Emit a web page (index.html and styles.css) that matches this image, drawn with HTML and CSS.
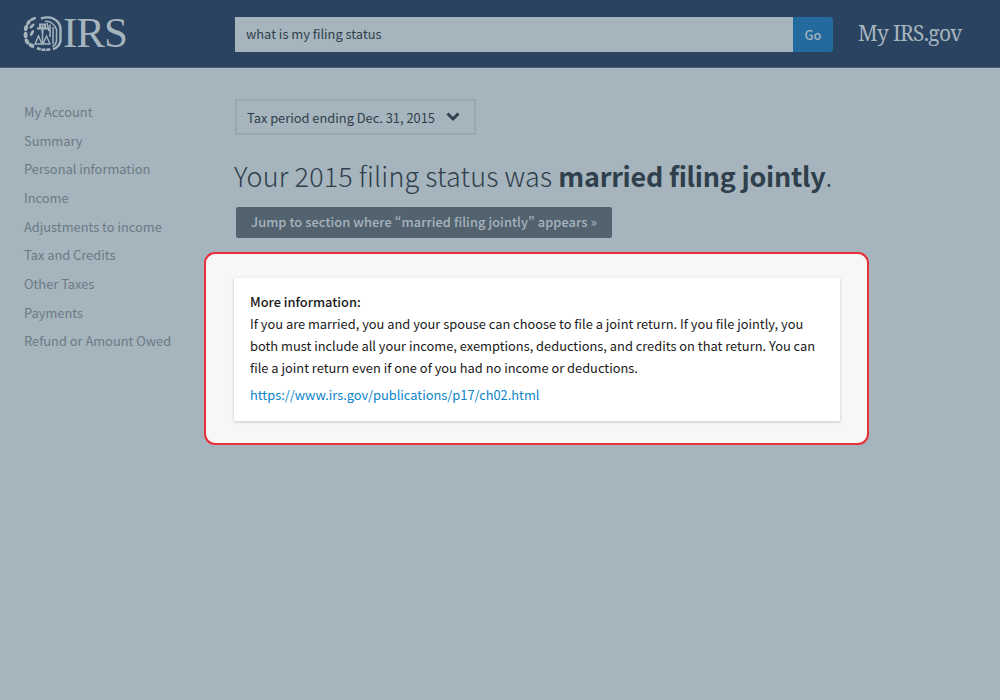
FILE: index.html
```html
<!DOCTYPE html>
<html lang="en">
<head>
<meta charset="utf-8">
<title>IRS</title>
<link rel="stylesheet" href="styles.css">
</head>
<body>
<header class="topbar">
  <a class="logo" href="#">
    <svg class="seal" width="40" height="36" viewBox="0 0 40 36" fill="#a6b4bd" stroke="none">
      <ellipse cx="3" cy="13" rx="2" ry="3.200" transform="rotate(15 3 13)"/>
      <ellipse cx="2.600" cy="20" rx="2" ry="3.200"/>
      <ellipse cx="4" cy="26.500" rx="2" ry="3.200" transform="rotate(-25 4 26.500)"/>
      <ellipse cx="8.500" cy="30.500" rx="3.200" ry="1.900" transform="rotate(30 8.500 30.500)"/>
      <ellipse cx="5.500" cy="7.500" rx="1.700" ry="3" transform="rotate(30 5.500 7.500)"/>
      <ellipse cx="10" cy="4" rx="3.400" ry="1.500" transform="rotate(-25 10 4)"/>
      <ellipse cx="9" cy="11" rx="3.200" ry="1.400" transform="rotate(-45 9 11)"/>
      <ellipse cx="9" cy="18" rx="3.200" ry="1.400" transform="rotate(-60 9 18)"/>
      <g fill="none" stroke="#a6b4bd">
        <path d="M14 33c4 2 9 2.500 14 1" stroke-width="2.600" stroke-dasharray="4 .8"/>
        <path d="M14 13.500h11M19.500 11v7M17 13V9.500h5V13" stroke-width="2"/>
        <path d="M19.500 18v10" stroke-width="1.500"/>
        <path d="M12 29l3.500-8 3.500 8zM20 29l3.500-8 3.500 8z" stroke-width="1.400"/>
        <path d="M18 3.500C27 .5 36 4 37.500 13v13c-1 4-3.500 7-7.500 8" stroke-width="2.400"/>
        <path d="M22 6.500c5-1 10 3 11.500 8V26c-.5 2.500-2 4.500-4 5.500" stroke-width="1.500"/>
        <path d="M30 12v17M27 9.500V22M24 8l2 8" stroke-width="1.500"/>
      </g>
    </svg>
    <span class="wordmark">IRS</span>
  </a>
  <form class="search">
    <div class="search-field">what is my filing status</div>
    <button class="search-go" type="button">Go</button>
  </form>
  <a class="myirs" href="#">My IRS.gov</a>
</header>
<div class="page">
  <nav class="sidenav">
    <a href="#">My Account</a>
    <a href="#">Summary</a>
    <a href="#">Personal information</a>
    <a href="#">Income</a>
    <a href="#">Adjustments to income</a>
    <a href="#">Tax and Credits</a>
    <a href="#">Other Taxes</a>
    <a href="#">Payments</a>
    <a href="#">Refund or Amount Owed</a>
  </nav>
  <main class="content">
    <div class="period">
      <span>Tax period ending Dec. 31, 2015</span>
      <svg width="14" height="10" viewBox="0 0 14 10" fill="none" stroke="#2f3f4c" stroke-width="3"><path d="M1.500 1.500 7 7l5.500-5.500"/></svg>
    </div>
    <h1 class="headline">Your 2015 filing status was <strong>married filing jointly</strong>.</h1>
    <a class="jump" href="#">Jump to section where “married filing jointly” appears »</a>
    <section class="highlight">
      <div class="card">
        <p class="card-title">More information:</p>
        <p class="card-text">If you are married, you and your spouse can choose to file a joint return. If you file jointly, you both must include all your income, exemptions, deductions, and credits on that return. You can file a joint return even if one of you had no income or deductions.</p>
        <a class="card-link" href="#">https://www.irs.gov/publications/p17/ch02.html</a>
      </div>
    </section>
  </main>
</div>
</body>
</html>
```
FILE: styles.css
```css
* { box-sizing: border-box; }
html, body { height: 100%; }
body {
  margin: 0;
  background: #a6b4bd;
  font-family: "Noto Sans CJK SC", "Noto Sans", sans-serif;
  font-variant-east-asian: proportional-width;
  color: #2f3f4c;
}
a { text-decoration: none; }
.topbar {
  height: 68px;
  background: #2a4361;
  border-bottom: 1px solid #4a5f78;
  display: flex;
  align-items: center;
  padding-left: 24px;
}
.logo { display: flex; align-items: center; width: 211px; margin-top: -2px; }
.seal { flex: none; margin-left: -1px; }
.wordmark {
  font-family: "Liberation Serif", serif;
  font-size: 43px;
  letter-spacing: -1px;
  line-height: 36px;
  color: #a6b4bd;
}
.search { display: flex; width: 598px; height: 35px; margin-top: 1px; }
.search-field {
  flex: 1;
  background: #a6b4bd;
  color: #2f3f4c;
  font-size: 12.850px;
  line-height: 34px;
  padding-left: 11px;
}
.search-go {
  width: 40px;
  border: 0;
  padding: 0;
  background: #236a9e;
  color: #a6b4bd;
  font: 500 12.850px "Noto Sans CJK SC", sans-serif;
  border-radius: 0 3px 3px 0;
}
.myirs {
  margin-left: 25px;
  margin-top: -1px;
  font-family: "Noto Serif", "DejaVu Serif", serif;
  font-size: 21px;
  letter-spacing: -0.700px;
  color: #a6b4bd;
}
.page { display: flex; padding: 31px 0 0 24px; }
.sidenav { width: 211px; display: flex; flex-direction: column; gap: 8px; padding-top: 3px; }
.sidenav a {
  font-size: 12.850px;
  line-height: 20.670px;
  color: #6b7a85;
}
.content { width: 640px; }
.period {
  width: 241px;
  height: 36px;
  border: 2px solid #98a8b2;
  display: flex;
  align-items: center;
  justify-content: space-between;
  padding: 0 14px 0 10px;
  font-size: 12.850px;
}
.headline {
  margin: 21px 0 11px -1px;
  font-size: 26.900px;
  line-height: 40px;
  font-weight: 200;
  letter-spacing: 0.150px;
  color: #2f3f4c;
  white-space: nowrap;
}
.headline strong { font-weight: 700; letter-spacing: -0.240px; }
.jump {
  display: block;
  width: 376px;
  height: 31px;
  margin-left: 1px;
  background: #53626f;
  border-radius: 2px;
  color: #a6b4bd;
  font-size: 12.850px;
  font-weight: 500;
  line-height: 30px;
  letter-spacing: 0.060px;
  text-align: center;
}
.highlight {
  margin: 14px 0 0 -31px;
  width: 665px;
  height: 193px;
  padding: 24px 28px;
  background: #f7f7f7;
  border: 2px solid #e8303a;
  border-radius: 11px;
}
.card {
  background: #fff;
  height: 143px;
  width: 606px;
  padding: 13px 16px;
  box-shadow: 0 1px 3px rgba(0, 0, 0, 0.200);
  font-size: 12.850px;
  line-height: 22px;
  color: #1a1a1a;
}
.card-title { margin: 0; font-weight: 500; }
.card-text { margin: 0 0 5px; }
.card-link { color: #0b85c8; }
```
